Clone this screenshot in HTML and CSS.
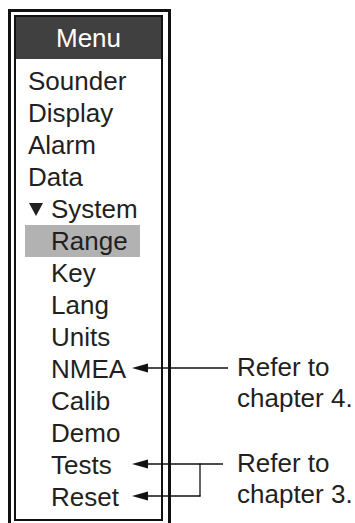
FILE: index.html
```html
<!DOCTYPE html>
<html lang="en">
<head>
    <meta charset="UTF-8">
    <meta name="viewport" content="width=device-width, initial-scale=1.0">
    <title>Menu</title>
    <link rel="stylesheet" href="styles.css">
</head>

<body>
    <div class="page">
        <div class="frame">
            <div class="menu">
                <div class="menu-title">Menu</div>
                <ul class="menu-list">
                    <li class="item">Sounder</li>
                    <li class="item">Display</li>
                    <li class="item">Alarm</li>
                    <li class="item">Data</li>
                    <li class="item open">
                        <span class="caret">
                            <svg width="14" height="13" viewBox="0 0 14 13"><polygon points="0,0 14,0 7,13" fill="#231f20"/></svg>
                        </span>System
                    </li>
                    <li class="item sub active">Range</li>
                    <li class="item sub">Key</li>
                    <li class="item sub">Lang</li>
                    <li class="item sub">Units</li>
                    <li class="item sub">NMEA</li>
                    <li class="item sub">Calib</li>
                    <li class="item sub">Demo</li>
                    <li class="item sub">Tests</li>
                    <li class="item sub">Reset</li>
                </ul>
            </div>
        </div>

        <!-- callouts drawn over the frame -->
        <div class="callout callout-nmea">
            <svg class="leader" width="97" height="32" viewBox="0 0 97 32">
                <line x1="10" y1="16" x2="97" y2="16" stroke="#111" stroke-width="1.3"/>
                <polygon points="1,16 17,11.5 17,20.5" fill="#111"/>
            </svg>
            <p class="note">Refer to<br>chapter 4.</p>
        </div>

        <div class="callout callout-tests">
            <svg class="leader" width="92" height="64" viewBox="0 0 92 64">
                <line x1="10" y1="16" x2="92" y2="16" stroke="#111" stroke-width="1.3"/>
                <line x1="10" y1="48" x2="69.5" y2="48" stroke="#111" stroke-width="1.3"/>
                <line x1="69" y1="15.4" x2="69" y2="48.6" stroke="#111" stroke-width="1.3"/>
                <polygon points="1,16 17,11.5 17,20.5" fill="#111"/>
                <polygon points="1,48 17,43.5 17,52.5" fill="#111"/>
            </svg>
            <p class="note">Refer to<br>chapter 3.</p>
        </div>
    </div>
</body>
</html>
```

FILE: styles.css
```css
body {
    margin: 0;
    padding: 0;
    background: #fff;
    color: #231f20;
    font-family: "Liberation Sans", Arial, sans-serif;
    font-size: 26px;
}

.page {
    position: relative;
    height: 523px;
    overflow: hidden;
    padding: 9px 0 0 8px;
    box-sizing: border-box;
}

.frame {
    width: 149px;
    border: 3px solid #111;
    padding: 3px 5px 3px 3px;
}

.menu {
    border: 2px solid #111;
    padding-bottom: 6px;
}

.menu-title {
    background: #404040;
    color: #fff;
    text-align: center;
    line-height: 42px;
    height: 42px;
}

.menu-list {
    list-style: none;
    margin: 0;
    padding: 6px 0 0 0;
}

.item {
    line-height: 32px;
    height: 32px;
    padding-left: 12px;
    white-space: nowrap;
}

.caret {
    display: inline-block;
    width: 23px;
    padding-left: 1px;
    box-sizing: border-box;
}

.caret svg {
    vertical-align: 2px;
}

.item.sub {
    padding-left: 35px;
}

.item.active {
    background: #b2b2b2;
    margin-left: 9px;
    width: 115px;
    padding-left: 26px;
    box-sizing: border-box;
}

.callout {
    position: absolute;
    left: 131px;
    display: flex;
    align-items: flex-start;
}

.callout-nmea {
    top: 352px;
}

.callout-tests {
    top: 448px;
}

.leader {
    display: block;
    flex: none;
}

.note {
    margin: 0;
    line-height: 31px;
    white-space: nowrap;
}

.callout-nmea .note {
    margin-left: 9px;
}

.callout-tests .note {
    margin-left: 14px;
}
```
